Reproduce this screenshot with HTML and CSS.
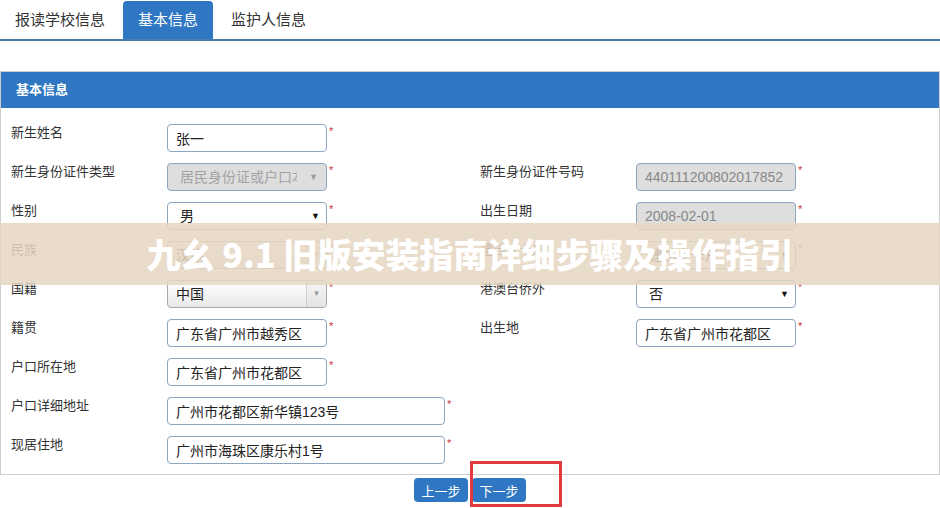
FILE: index.html
```html
<!DOCTYPE html>
<html lang="zh-CN">
<head>
    <meta charset="utf-8">
    <title>基本信息</title>
    <link rel="stylesheet" href="styles.css">
</head>
<body>
    <div class="tabs">
        <a href="#" class="tab">报读学校信息</a>
        <a href="#" class="tab active">基本信息</a>
        <a href="#" class="tab">监护人信息</a>
    </div>

    <div class="panel">
        <div class="panel-head">基本信息</div>
        <div class="form-grid">
            <div class="field">
                <label>新生姓名</label>
                <input type="text" class="box" value="张一"><span class="req">*</span>
            </div>
            <div class="field"></div>

            <div class="field">
                <label>新生身份证件类型</label>
                <div class="box select disabled"><span class="val">居民身份证或户口本</span><span class="arrow">▼</span></div><span class="req">*</span>
            </div>
            <div class="field">
                <label>新生身份证件号码</label>
                <input type="text" class="box disabled" value="440111200802017852" disabled><span class="req">*</span>
            </div>

            <div class="field">
                <label>性别</label>
                <div class="box select"><span class="val">男</span><span class="arrow">▼</span></div><span class="req">*</span>
            </div>
            <div class="field">
                <label>出生日期</label>
                <input type="text" class="box disabled" value="2008-02-01" disabled><span class="req">*</span>
            </div>

            <div class="field">
                <label>民族</label>
                <div class="box chosen"><span class="val">汉族</span><span class="drop">▼</span></div><span class="req">*</span>
            </div>
            <div class="field">
                <label>建档立卡户</label>
                <div class="box select"><span class="val">建档立卡户</span><span class="arrow">▼</span></div><span class="req">*</span>
            </div>

            <div class="field">
                <label>国籍</label>
                <div class="box chosen"><span class="val">中国</span><span class="drop">▼</span></div><span class="req">*</span>
            </div>
            <div class="field">
                <label>港澳台侨外</label>
                <div class="box select"><span class="val">否</span><span class="arrow">▼</span></div><span class="req">*</span>
            </div>

            <div class="field">
                <label>籍贯</label>
                <input type="text" class="box" value="广东省广州市越秀区"><span class="req">*</span>
            </div>
            <div class="field">
                <label>出生地</label>
                <input type="text" class="box" value="广东省广州市花都区"><span class="req">*</span>
            </div>

            <div class="field">
                <label>户口所在地</label>
                <input type="text" class="box" value="广东省广州市花都区"><span class="req">*</span>
            </div>
            <div class="field"></div>

            <div class="field wide">
                <label>户口详细地址</label>
                <input type="text" class="box long" value="广州市花都区新华镇123号"><span class="req">*</span>
            </div>

            <div class="field wide">
                <label>现居住地</label>
                <input type="text" class="box long" value="广州市海珠区康乐村1号"><span class="req">*</span>
            </div>
        </div>
    </div>

    <div class="actions">
        <button type="button" class="btn">上一步</button>
        <button type="button" class="btn">下一步</button>
    </div>

    <div class="mark"></div>
    <div class="banner">九幺 9.1 旧版安装指南详细步骤及操作指引</div>
</body>
</html>
```

FILE: styles.css
```css
* {
    box-sizing: border-box;
    margin: 0;
    padding: 0;
}
body {
    background: #fff;
    color: #333;
    font-family: "Liberation Sans", "Noto Sans CJK SC", sans-serif;
    font-size: 13px;
    width: 940px;
    height: 508px;
    position: relative;
    overflow: hidden;
}
.tabs {
    display: flex;
    gap: 3px;
    height: 41px;
    border-bottom: 2px solid #4a7ead;
}
.tab {
    display: block;
    padding: 0 15px;
    line-height: 39px;
    font-size: 15px;
    color: #333;
    text-decoration: none;
}
.tab.active {
    margin-top: 1px;
    line-height: 38px;
    background: #2f77c2;
    color: #fff;
    border-radius: 4px 4px 0 0;
}
.panel {
    margin-top: 30px;
    border: 1px solid #cfcfcf;
}
.panel-head {
    height: 36px;
    line-height: 36px;
    padding-left: 15px;
    background: #2f77c2;
    color: #fff;
    font-weight: bold;
    font-size: 13px;
}
.form-grid {
    display: grid;
    grid-template-columns: 469px 1fr;
    row-gap: 11px;
    padding: 16px 0 10px 10px;
}
.field {
    display: flex;
    align-items: flex-start;
    height: 28px;
}
.field.wide {
    grid-column: 1 / 3;
}
.field label {
    width: 156px;
    line-height: 18px;
    color: #333;
}
.box {
    width: 160px;
    height: 28px;
    border: 1px solid #8aa6c2;
    border-radius: 4px;
    background: #fff;
    font: inherit;
    font-size: 14px;
    color: #222;
    padding: 0 8px;
    line-height: 26px;
    outline: none;
}
.box.long {
    width: 278px;
}
.box.disabled {
    background: #dedede;
    color: #888;
}
.select {
    display: flex;
    justify-content: space-between;
    padding: 0 6px 0 12px;
    overflow: hidden;
}
.select .val {
    white-space: nowrap;
    overflow: hidden;
}
.select .arrow {
    font-size: 9px;
    color: #111;
    padding-left: 4px;
}
.select.disabled {
    color: #a3a3a3;
    padding-right: 8px;
}
.select.disabled .arrow {
    color: #9a9a9a;
    padding-left: 12px;
    background: #dedede;
}
.chosen {
    display: flex;
    padding: 0;
    overflow: hidden;
    background: linear-gradient(#ffffff, #f4f4f4 50%, #e8e8e8);
    border-color: #a9a9a9;
}
.chosen .val {
    flex: 1;
    padding-left: 8px;
}
.chosen .drop {
    width: 20px;
    text-align: center;
    font-size: 8px;
    color: #999;
    border-left: 1px solid #cfcfcf;
    background: linear-gradient(#f5f5f5, #e4e4e4);
}
.req {
    color: #c8333f;
    font-size: 11px;
    line-height: 14px;
    padding-left: 2px;
}
.actions {
    display: flex;
    justify-content: center;
    gap: 4px;
    margin-top: 3px;
}
.btn {
    width: 54px;
    height: 24px;
    border: none;
    border-radius: 4px;
    background: #2f77c2;
    color: #fff;
    font: inherit;
    font-size: 13px;
}
.mark {
    position: absolute;
    left: 470px;
    top: 461px;
    width: 92px;
    height: 46px;
    border: 3px solid #e03a3e;
}
.banner {
    position: absolute;
    left: 0;
    top: 223px;
    width: 940px;
    height: 62px;
    line-height: 62px;
    background: rgba(229, 214, 194, 0.86);
    color: #fff;
    text-align: center;
    font-family: "Noto Sans CJK SC", sans-serif;
    font-weight: 900;
    font-size: 34px;
}
```
